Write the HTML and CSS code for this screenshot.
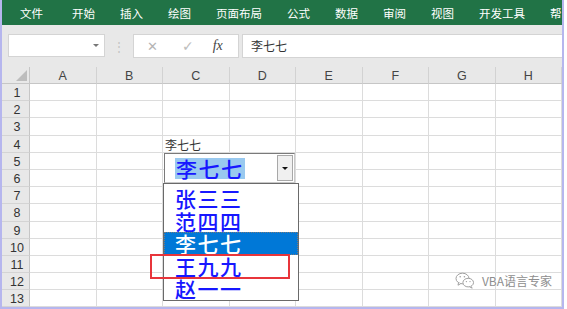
FILE: index.html
```html
<!DOCTYPE html>
<html lang="zh-CN">
<head>
    <meta charset="UTF-8">
    <title>数据验证 - 下拉列表</title>
    <link rel="stylesheet" href="styles.css">
</head>
<body>
    <div class="janela">
        <!-- Faixa de abas -->
        <div class="faixa">
            <span class="aba primeira">文件</span>
            <span class="aba">开始</span>
            <span class="aba">插入</span>
            <span class="aba">绘图</span>
            <span class="aba">页面布局</span>
            <span class="aba">公式</span>
            <span class="aba">数据</span>
            <span class="aba">审阅</span>
            <span class="aba">视图</span>
            <span class="aba">开发工具</span>
            <span class="aba">帮</span>
        </div>

        <!-- Barra de fórmulas -->
        <div class="barra-formula">
            <div class="caixa-nome"><span class="seta-nome"></span></div>
            <div class="separador">⋮</div>
            <div class="botoes-fx">
                <span class="cancelar">✕</span>
                <span class="confirmar">✓</span>
                <span class="fx">fx</span>
            </div>
            <div class="entrada-formula">李七七</div>
        </div>

        <!-- Planilha -->
        <div class="planilha">
            <div class="grade">
                <div class="canto"><span class="triangulo"></span></div>
                <div class="col">A</div><div class="col">B</div><div class="col">C</div><div class="col">D</div><div class="col">E</div><div class="col">F</div><div class="col">G</div><div class="col">H</div>

                <div class="lin">1</div><div class="cel"></div><div class="cel"></div><div class="cel"></div><div class="cel"></div><div class="cel"></div><div class="cel"></div><div class="cel"></div><div class="cel"></div>
                <div class="lin">2</div><div class="cel"></div><div class="cel"></div><div class="cel"></div><div class="cel"></div><div class="cel"></div><div class="cel"></div><div class="cel"></div><div class="cel"></div>
                <div class="lin">3</div><div class="cel"></div><div class="cel"></div><div class="cel"></div><div class="cel"></div><div class="cel"></div><div class="cel"></div><div class="cel"></div><div class="cel"></div>
                <div class="lin">4</div><div class="cel"></div><div class="cel"></div><div class="cel texto">李七七</div><div class="cel"></div><div class="cel"></div><div class="cel"></div><div class="cel"></div><div class="cel"></div>
                <div class="lin">5</div><div class="cel"></div><div class="cel"></div><div class="cel"></div><div class="cel"></div><div class="cel"></div><div class="cel"></div><div class="cel"></div><div class="cel"></div>
                <div class="lin">6</div><div class="cel"></div><div class="cel"></div><div class="cel"></div><div class="cel"></div><div class="cel"></div><div class="cel"></div><div class="cel"></div><div class="cel"></div>
                <div class="lin">7</div><div class="cel"></div><div class="cel"></div><div class="cel"></div><div class="cel"></div><div class="cel"></div><div class="cel"></div><div class="cel"></div><div class="cel"></div>
                <div class="lin">8</div><div class="cel"></div><div class="cel"></div><div class="cel"></div><div class="cel"></div><div class="cel"></div><div class="cel"></div><div class="cel"></div><div class="cel"></div>
                <div class="lin">9</div><div class="cel"></div><div class="cel"></div><div class="cel"></div><div class="cel"></div><div class="cel"></div><div class="cel"></div><div class="cel"></div><div class="cel"></div>
                <div class="lin">10</div><div class="cel"></div><div class="cel"></div><div class="cel"></div><div class="cel"></div><div class="cel"></div><div class="cel"></div><div class="cel"></div><div class="cel"></div>
                <div class="lin">11</div><div class="cel"></div><div class="cel"></div><div class="cel"></div><div class="cel"></div><div class="cel"></div><div class="cel"></div><div class="cel"></div><div class="cel"></div>
                <div class="lin">12</div><div class="cel"></div><div class="cel"></div><div class="cel"></div><div class="cel"></div><div class="cel"></div><div class="cel"></div><div class="cel"></div><div class="cel"></div>
                <div class="lin">13</div><div class="cel"></div><div class="cel"></div><div class="cel"></div><div class="cel"></div><div class="cel"></div><div class="cel"></div><div class="cel"></div><div class="cel"></div>
            </div>

            <!-- Caixa de combinação -->
            <div class="combo">
                <span class="combo-texto">李七七</span>
                <span class="combo-botao"><span class="seta"></span></span>
            </div>

            <!-- Lista aberta -->
            <div class="lista">
                <div class="item">张三三</div>
                <div class="item">范四四</div>
                <div class="item selecionado">李七七</div>
                <div class="item">王九九</div>
                <div class="item">赵一一</div>
            </div>

            <!-- Destaque vermelho -->
            <div class="destaque"></div>
        </div>

        <!-- Marca d'água -->
        <div class="marca">
            <svg width="20" height="17" viewBox="0 0 20 17">
                <ellipse cx="7.5" cy="6.5" rx="6.5" ry="5.3" fill="none" stroke="#a0a0a0" stroke-width="1"/>
                <path d="M3.5 10.8 L3 13.2 L5.8 11.6" fill="#fff" stroke="#a0a0a0" stroke-width="1"/>
                <ellipse cx="13.2" cy="10.6" rx="5.3" ry="4.3" fill="#fff" stroke="#a0a0a0" stroke-width="1"/>
                <path d="M16 14.3 L17.2 16.2 L14.6 14.8" fill="#fff" stroke="#a0a0a0" stroke-width="1"/>
                <circle cx="5.2" cy="4.8" r="0.8" fill="#a0a0a0"/>
                <circle cx="9.4" cy="4.8" r="0.8" fill="#a0a0a0"/>
                <circle cx="11.4" cy="9.6" r="0.7" fill="#a0a0a0"/>
                <circle cx="15" cy="9.6" r="0.7" fill="#a0a0a0"/>
            </svg>
            <span>VBA语言专家</span>
        </div>
    </div>
</body>
</html>
```

FILE: styles.css
```css
* {
    margin: 0;
    padding: 0;
    box-sizing: border-box;
}

body {
    font-family: 'Noto Sans CJK SC', sans-serif;
    background-color: #fff;
    color: #333;
    overflow: hidden;
}

.janela {
    width: 564px;
    height: 309px;
    border-left: 2px solid #b6b6ee;
    border-right: 2px solid #b6b6ee;
    border-bottom: 2px solid #b6b6ee;
    background-color: #e8e8e8;
    position: relative;
    overflow: hidden;
}

/* faixa verde */
.faixa {
    height: 25px;
    background-color: #217346;
    display: flex;
    align-items: center;
    gap: 25px;
    padding-left: 18px;
    white-space: nowrap;
    overflow: hidden;
}

.aba {
    color: #fff;
    font-size: 11.5px;
    line-height: 14px;
}

.aba.primeira {
    margin-right: 4px;
}

/* barra de fórmulas */
.barra-formula {
    height: 42px;
    display: flex;
    align-items: flex-start;
    padding-top: 9px;
    padding-left: 6px;
}

.caixa-nome {
    width: 97px;
    height: 23px;
    background-color: #fff;
    border: 1px solid #d4d4d4;
    display: flex;
    align-items: center;
    justify-content: flex-end;
    padding-right: 5px;
}

.seta-nome {
    width: 0;
    height: 0;
    border-left: 3px solid transparent;
    border-right: 3px solid transparent;
    border-top: 3px solid #777;
}

.separador {
    width: 28px;
    text-align: center;
    color: #c4c4c4;
    font-size: 12px;
    line-height: 23px;
}

.botoes-fx {
    width: 106px;
    height: 24px;
    background-color: #fff;
    border: 1px solid #d4d4d4;
    display: flex;
    align-items: center;
    font-family: 'DejaVu Sans', sans-serif;
    color: #b4b4b4;
    font-size: 14px;
}

.cancelar {
    margin-left: 13px;
    font-size: 13px;
}

.confirmar {
    margin-left: 24px;
    font-size: 14px;
    color: #bdbdbd;
}

.fx {
    margin-left: 19px;
    font-family: 'Liberation Serif', serif;
    font-style: italic;
    font-size: 14px;
    color: #444;
}

.entrada-formula {
    flex: 1;
    height: 24px;
    margin-left: 3px;
    background-color: #fff;
    border: 1px solid #d4d4d4;
    border-right: none;
    font-size: 12px;
    line-height: 22px;
    padding-left: 8px;
    color: #333;
}

/* planilha */
.planilha {
    position: relative;
}

.grade {
    display: grid;
    grid-template-columns: 28px repeat(8, 66.5px);
    grid-template-rows: 17px;
    grid-auto-rows: 17.2px;
    background-color: #fff;
}

.canto,
.col,
.lin {
    background-color: #e8e8e8;
    color: #444;
}

.canto {
    display: flex;
    align-items: flex-end;
    justify-content: flex-end;
    padding: 0 2px 2px 0;
    border-bottom: 1px solid #c6c6c6;
    border-right: 1px solid #c6c6c6;
}

.triangulo {
    width: 11px;
    height: 11px;
    background-color: #bdbdbd;
    clip-path: polygon(100% 0, 100% 100%, 0 100%);
}

.col {
    font-family: 'Liberation Sans', sans-serif;
    font-size: 12.5px;
    text-align: center;
    line-height: 19px;
    border-right: 1px solid #d2d2d2;
    border-bottom: 1px solid #c6c6c6;
}

.lin {
    font-family: 'Liberation Sans', sans-serif;
    font-size: 12.5px;
    text-align: center;
    line-height: 18px;
    border-bottom: 1px solid #d4d4d4;
    border-right: 1px solid #c6c6c6;
    color: #333;
    padding-left: 3px;
}

.cel {
    border-right: 1px solid #dcdcdc;
    border-bottom: 1px solid #dcdcdc;
}

.cel.texto {
    font-size: 12px;
    line-height: 17px;
    padding-left: 2px;
    color: #333;
}

/* caixa de combinação */
.combo {
    position: absolute;
    left: 162px;
    top: 86px;
    width: 131px;
    height: 30px;
    background-color: #fff;
    border: 1px solid #7a7a7a;
    border-right-color: #c8c8c8;
    border-bottom-color: #c8c8c8;
    display: flex;
    align-items: center;
    padding-right: 1px;
}

.combo-texto {
    margin-left: 10px;
    background-color: #99c9ef;
    color: #1717ff;
    font-size: 21px;
    font-weight: 500;
    line-height: 21px;
    letter-spacing: 1.5px;
    padding: 0 1px 0 1px;
}

.combo-botao {
    margin-left: auto;
    width: 16px;
    height: 26px;
    background-color: #f0f0f0;
    border: 1px solid #a8a8a8;
    display: flex;
    align-items: center;
    justify-content: center;
}

.seta {
    width: 0;
    height: 0;
    border-left: 3px solid transparent;
    border-right: 3px solid transparent;
    border-top: 3px solid #111;
}

/* lista aberta */
.lista {
    position: absolute;
    left: 161px;
    top: 116px;
    width: 136px;
    height: 118px;
    background-color: #fff;
    border: 1px solid #6a6a6a;
    padding-top: 3px;
    z-index: 1;
}

.item {
    height: 22.6px;
    line-height: 22.6px;
    padding-left: 11px;
    font-size: 21px;
    font-weight: 500;
    letter-spacing: 1.5px;
    color: #1717ff;
}

.item.selecionado {
    background-color: #0078d7;
    color: #fff;
    outline: 1px dotted #7a7a7a;
    outline-offset: -1px;
}

/* destaque vermelho */
.destaque {
    position: absolute;
    left: 148px;
    top: 187px;
    width: 140px;
    height: 25px;
    border: 2px solid #e8353b;
    z-index: 2;
}

/* marca d'água */
.marca {
    position: absolute;
    right: 10px;
    bottom: 18px;
    display: flex;
    align-items: center;
    gap: 7px;
    color: #8e8e8e;
    font-size: 12px;
    text-shadow: 0 0 2px #fff, 0 0 2px #fff;
}
```
